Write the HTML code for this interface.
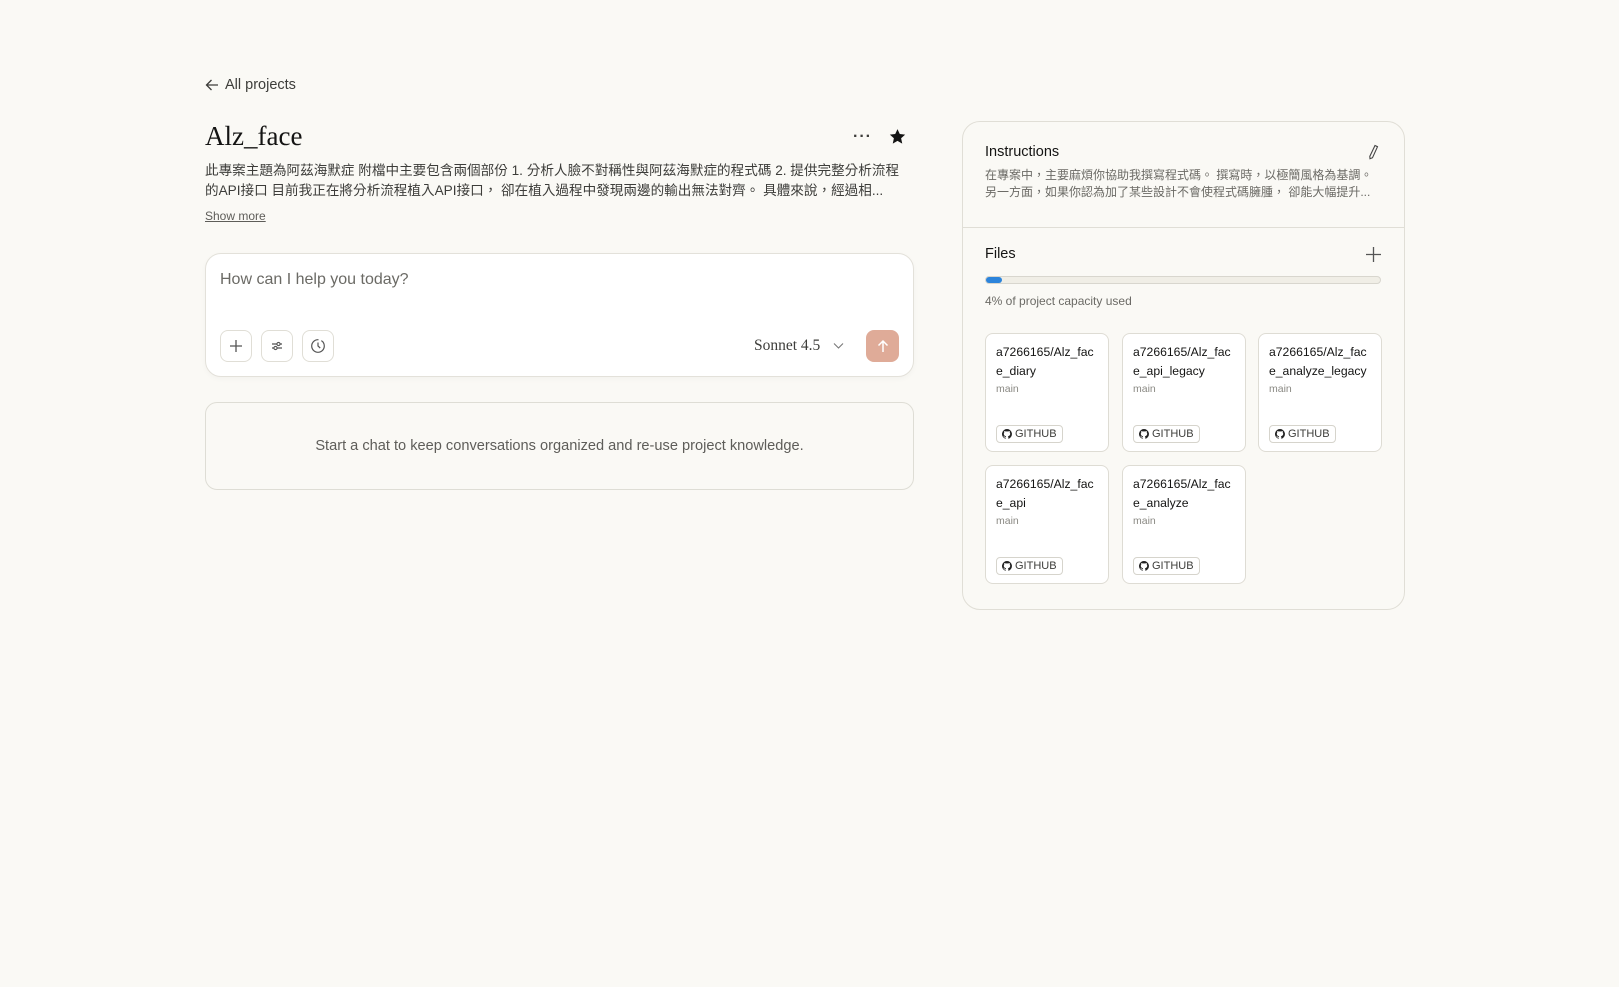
<!DOCTYPE html>
<html><head><meta charset="utf-8"><style>
*{box-sizing:border-box;margin:0;padding:0}
body{width:1619px;height:987px;background:#faf9f5;font-family:"Liberation Sans","Noto Sans CJK TC",sans-serif;color:#3d3d3a;position:relative;overflow:hidden}
.abs{position:absolute}
.desc{left:205px;top:161px;width:710px;font-size:13.6px;line-height:20px;color:#3d3d3a;white-space:nowrap;overflow:hidden}
.card{position:absolute;width:124px;height:119px;background:#fff;border:1px solid #dedcd4;border-radius:8px;padding:9px 10px}
.card .t{font-size:12.2px;line-height:18.5px;color:#141413;word-break:break-all}
.card .m{font-size:10.5px;color:#8a8983;margin-top:3px}
.card .g{position:absolute;left:10px;bottom:8px;height:18px;border:1px solid #d6d4cc;border-radius:4px;font-size:11px;padding:0 5px;display:flex;align-items:center;gap:3px;color:#3d3d3a}
.ib{position:absolute;width:32px;height:32px;border:1px solid #e0ded6;border-radius:8px;top:330px;display:flex;align-items:center;justify-content:center}
</style></head><body>
<div class="abs" style="left:205px;top:77px;font-size:14.5px;color:#3d3d3a;display:flex;align-items:center;gap:6px">
<svg width="14" height="14" viewBox="0 0 14 14"><path d="M13 7H1.5M6.5 2L1.5 7l5 5" stroke="#3d3d3a" stroke-width="1.3" fill="none"/></svg>All projects</div>
<div class="abs" style="left:205px;top:121px;font-family:'Liberation Serif',serif;font-size:27px;color:#141413">Alz_face</div>
<div class="abs" style="left:853px;top:128px;font-size:16px;letter-spacing:1px;color:#3d3d3a;font-weight:bold">···</div>
<svg class="abs" style="left:889px;top:128px" width="17" height="17" viewBox="0 0 24 24"><path d="M12 1.5l3.2 7 7.6.8-5.7 5.2 1.6 7.5L12 18.2 5.3 22l1.6-7.5L1.2 9.3l7.6-.8z" fill="#141413"/></svg>
<div class="abs desc">此專案主題為阿茲海默症 附檔中主要包含兩個部份 1. 分析人臉不對稱性與阿茲海默症的程式碼 2. 提供完整分析流程<br>的API接口 目前我正在將分析流程植入API接口， 卻在植入過程中發現兩邊的輸出無法對齊。 具體來說，經過相...</div>
<div class="abs" style="left:205px;top:209px;font-size:12px;text-decoration:underline;color:#5e5d59">Show more</div>

<div class="abs" style="left:205px;top:253px;width:709px;height:124px;background:#fff;border:1px solid #e3e1da;border-radius:16px;box-shadow:0 2px 6px rgba(0,0,0,.03)"></div>
<div class="abs" style="left:220px;top:271px;font-size:16px;color:#6b6a65">How can I help you today?</div>
<div class="ib" style="left:220px"><svg width="14" height="14"><path d="M7 1v12M1 7h12" stroke="#555" stroke-width="1.3"/></svg></div>
<div class="ib" style="left:261px"><svg width="14" height="14"><path d="M2 5h10M2 9h10" stroke="#555" stroke-width="1.2"/><circle cx="8.5" cy="5" r="1.6" fill="#fff" stroke="#555" stroke-width="1.1"/><circle cx="5.5" cy="9" r="1.6" fill="#fff" stroke="#555" stroke-width="1.1"/></svg></div>
<div class="ib" style="left:302px"><svg width="16" height="16" viewBox="0 0 16 16"><circle cx="8" cy="8" r="6.3" fill="none" stroke="#555" stroke-width="1.2" stroke-dasharray="30 3"/><path d="M8 4.5V8l2.2 2" stroke="#555" stroke-width="1.2" fill="none"/></svg></div>
<div class="abs" style="left:754px;top:337px;font-family:'Liberation Serif',serif;font-size:15.5px;color:#3d3d3a">Sonnet 4.5</div>
<svg class="abs" style="left:833px;top:342px" width="11" height="8"><path d="M1 1.5l4.5 4.5 4.5-4.5" stroke="#777" stroke-width="1.1" fill="none"/></svg>
<div class="abs" style="left:866px;top:330px;width:33px;height:32px;background:#dfab98;border-radius:8px;display:flex;align-items:center;justify-content:center"><svg width="14" height="14"><path d="M7 13V2M2.5 6.5L7 2l4.5 4.5" stroke="#fff" stroke-width="1.5" fill="none"/></svg></div>

<div class="abs" style="left:205px;top:402px;width:709px;height:88px;border:1px solid #deddd5;border-radius:12px;display:flex;align-items:center;justify-content:center;font-size:14.6px;color:#5e5d59;padding-top:0px">Start a chat to keep conversations organized and re-use project knowledge.</div>

<div class="abs" style="left:962px;top:121px;width:443px;height:489px;border:1px solid #e0ded6;border-radius:18px"></div>
<div class="abs" style="left:962px;top:227px;width:443px;height:1px;background:#e0ded6"></div>
<div class="abs" style="left:985px;top:144px;font-size:14.5px;color:#141413">Instructions</div>
<svg class="abs" style="left:1367px;top:144px" width="12" height="16" viewBox="0 0 12 16"><path d="M8 1.5l2.5 1.2-5 11-2.5 1-.2-2.3z" fill="none" stroke="#444" stroke-width="1.1"/></svg>
<div class="abs" style="left:985px;top:167px;font-size:12px;line-height:16.5px;color:#6b6a65;white-space:nowrap">在專案中，主要麻煩你協助我撰寫程式碼。 撰寫時，以極簡風格為基調。<br>另一方面，如果你認為加了某些設計不會使程式碼臃腫， 卻能大幅提升...</div>
<div class="abs" style="left:985px;top:246px;font-size:14.5px;color:#141413">Files</div>
<svg class="abs" style="left:1366px;top:247px" width="15" height="15"><path d="M7.5 0v15M0 7.5h15" stroke="#555" stroke-width="1.3"/></svg>
<div class="abs" style="left:985px;top:276px;width:396px;height:8px;background:#f0eee6;border:1px solid #d8d6ce;border-radius:4px"></div>
<div class="abs" style="left:986px;top:277px;width:16px;height:6px;background:#2c84db;border-radius:3px"></div>
<div class="abs" style="left:985px;top:294px;font-size:12px;color:#6b6a65">4% of project capacity used</div>

<div class="card" style="left:985px;top:333px"><div class="t">a7266165/Alz_fac e_diary</div><div class="m">main</div><div class="g"><svg width="10" height="10" viewBox="0 0 16 16"><path d="M8 0a8 8 0 0 0-2.5 15.6c.4 0 .5-.2.5-.4v-1.5c-2.2.5-2.7-1-2.7-1-.4-.9-.9-1.2-.9-1.2-.7-.5.1-.5.1-.5.8.1 1.2.8 1.2.8.7 1.3 1.9.9 2.3.7.1-.5.3-.9.5-1.1-1.8-.2-3.6-.9-3.6-4 0-.9.3-1.6.8-2.1-.1-.2-.4-1 .1-2.1 0 0 .7-.2 2.2.8a7.5 7.5 0 0 1 4 0c1.5-1 2.2-.8 2.2-.8.4 1.1.2 1.9.1 2.1.5.6.8 1.3.8 2.1 0 3.1-1.9 3.8-3.6 4 .3.3.6.8.6 1.5v2.2c0 .2.1.5.6.4A8 8 0 0 0 8 0z" fill="#222"/></svg>GITHUB</div></div>
<div class="card" style="left:1122px;top:333px"><div class="t">a7266165/Alz_fac e_api_legacy</div><div class="m">main</div><div class="g"><svg width="10" height="10" viewBox="0 0 16 16"><path d="M8 0a8 8 0 0 0-2.5 15.6c.4 0 .5-.2.5-.4v-1.5c-2.2.5-2.7-1-2.7-1-.4-.9-.9-1.2-.9-1.2-.7-.5.1-.5.1-.5.8.1 1.2.8 1.2.8.7 1.3 1.9.9 2.3.7.1-.5.3-.9.5-1.1-1.8-.2-3.6-.9-3.6-4 0-.9.3-1.6.8-2.1-.1-.2-.4-1 .1-2.1 0 0 .7-.2 2.2.8a7.5 7.5 0 0 1 4 0c1.5-1 2.2-.8 2.2-.8.4 1.1.2 1.9.1 2.1.5.6.8 1.3.8 2.1 0 3.1-1.9 3.8-3.6 4 .3.3.6.8.6 1.5v2.2c0 .2.1.5.6.4A8 8 0 0 0 8 0z" fill="#222"/></svg>GITHUB</div></div>
<div class="card" style="left:1258px;top:333px"><div class="t">a7266165/Alz_fac e_analyze_legacy</div><div class="m">main</div><div class="g"><svg width="10" height="10" viewBox="0 0 16 16"><path d="M8 0a8 8 0 0 0-2.5 15.6c.4 0 .5-.2.5-.4v-1.5c-2.2.5-2.7-1-2.7-1-.4-.9-.9-1.2-.9-1.2-.7-.5.1-.5.1-.5.8.1 1.2.8 1.2.8.7 1.3 1.9.9 2.3.7.1-.5.3-.9.5-1.1-1.8-.2-3.6-.9-3.6-4 0-.9.3-1.6.8-2.1-.1-.2-.4-1 .1-2.1 0 0 .7-.2 2.2.8a7.5 7.5 0 0 1 4 0c1.5-1 2.2-.8 2.2-.8.4 1.1.2 1.9.1 2.1.5.6.8 1.3.8 2.1 0 3.1-1.9 3.8-3.6 4 .3.3.6.8.6 1.5v2.2c0 .2.1.5.6.4A8 8 0 0 0 8 0z" fill="#222"/></svg>GITHUB</div></div>
<div class="card" style="left:985px;top:465px"><div class="t">a7266165/Alz_fac e_api</div><div class="m">main</div><div class="g"><svg width="10" height="10" viewBox="0 0 16 16"><path d="M8 0a8 8 0 0 0-2.5 15.6c.4 0 .5-.2.5-.4v-1.5c-2.2.5-2.7-1-2.7-1-.4-.9-.9-1.2-.9-1.2-.7-.5.1-.5.1-.5.8.1 1.2.8 1.2.8.7 1.3 1.9.9 2.3.7.1-.5.3-.9.5-1.1-1.8-.2-3.6-.9-3.6-4 0-.9.3-1.6.8-2.1-.1-.2-.4-1 .1-2.1 0 0 .7-.2 2.2.8a7.5 7.5 0 0 1 4 0c1.5-1 2.2-.8 2.2-.8.4 1.1.2 1.9.1 2.1.5.6.8 1.3.8 2.1 0 3.1-1.9 3.8-3.6 4 .3.3.6.8.6 1.5v2.2c0 .2.1.5.6.4A8 8 0 0 0 8 0z" fill="#222"/></svg>GITHUB</div></div>
<div class="card" style="left:1122px;top:465px"><div class="t">a7266165/Alz_fac e_analyze</div><div class="m">main</div><div class="g"><svg width="10" height="10" viewBox="0 0 16 16"><path d="M8 0a8 8 0 0 0-2.5 15.6c.4 0 .5-.2.5-.4v-1.5c-2.2.5-2.7-1-2.7-1-.4-.9-.9-1.2-.9-1.2-.7-.5.1-.5.1-.5.8.1 1.2.8 1.2.8.7 1.3 1.9.9 2.3.7.1-.5.3-.9.5-1.1-1.8-.2-3.6-.9-3.6-4 0-.9.3-1.6.8-2.1-.1-.2-.4-1 .1-2.1 0 0 .7-.2 2.2.8a7.5 7.5 0 0 1 4 0c1.5-1 2.2-.8 2.2-.8.4 1.1.2 1.9.1 2.1.5.6.8 1.3.8 2.1 0 3.1-1.9 3.8-3.6 4 .3.3.6.8.6 1.5v2.2c0 .2.1.5.6.4A8 8 0 0 0 8 0z" fill="#222"/></svg>GITHUB</div></div>
</body></html>
